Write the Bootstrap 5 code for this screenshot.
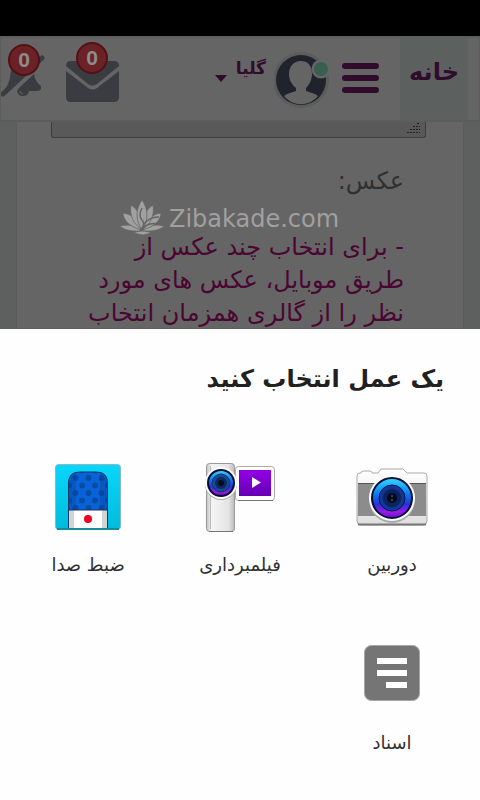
<!DOCTYPE html>
<html lang="fa" dir="rtl">
<head>
<meta charset="utf-8">
<meta name="viewport" content="width=device-width, initial-scale=1">
<title>یک عمل انتخاب کنید</title>
<link href="https://cdn.jsdelivr.net/npm/bootstrap@5.3.0/dist/css/bootstrap.min.css" rel="stylesheet">
<style>
body { font-family: "DejaVu Sans", sans-serif; background: #fefefe; color: #212121; }
svg { display: block; flex: none; }
.status-strip { height: 36px; background: #000; }
.top-bar { height: 86px; background: #656565; border: 2px solid #5c5c5c; border-left-width: 1px; border-right-width: 1px; direction: ltr; }
.home-tab { width: 68px; height: 82px; margin-right: 11px; background: #5c6160; color: #310b2c; font-size: 24px; line-height: 32px; padding-top: 18px; }
.user-link { color: #310b2c; font-size: 17px; line-height: 28px; padding-top: 16px; }
.user-link svg { margin-top: 21px; }
.bare { border: 0; background: none; padding: 0; }
.count { position: absolute; width: 32px; height: 32px; border: 2px solid #541015; border-radius: 50%; background: #6b2227; color: #8c8c8c; font: bold 21px/28px "Liberation Sans", sans-serif; text-align: center; }
.bell-count { left: 7px; top: 6px; }
.mail-count { left: 10px; top: 4px; }
.mail-btn { margin-left: 20px; }
.menu-btn { margin: 0 21px 0 12px; }
.page-area { height: 206px; background: #5d605f; overflow: hidden; }
.form-panel { margin: 0 16px; height: 206px; background: #656565; border: solid #595c5b; border-width: 0 1px; padding: 0 37px 0 34px; }
.note-input { display: block; width: 100%; height: 16px; resize: none; background: #595959; border: 1px solid #3c3c3c; border-top: 0; border-radius: 0 0 3px 3px; overflow: hidden; }
.grip { position: absolute; right: 6px; bottom: 5px; }
.photo-label { color: #303030; font-size: 24px; line-height: 32px; margin: 27px 22px 0 0; }
.brand-row { direction: ltr; height: 36px; margin: 2px 0 0 68px; color: #a0a0a0; font-size: 24px; line-height: 40px; }
.photo-help { color: #4a0632; font-size: 24px; line-height: 33px; margin: -4px 22px 0 0; white-space: nowrap; }
.sheet { background: #fefefe; border-top: 1px solid #606060; padding: 32px 12px 8px; }
.sheet-title { font-size: 24px; line-height: 36px; margin: 0 24px 60px; font-weight: bold; }
.choices { row-gap: 56px; }
.choice { width: 100%; color: #303030; font-size: 18px; line-height: 28px; }
.choice svg { margin: 0 auto 14px; }
</style>
<script src="https://cdn.jsdelivr.net/npm/bootstrap@5.3.0/dist/js/bootstrap.bundle.min.js"></script>
</head>
<body>
<div class="status-strip"></div>
<header class="top-bar d-flex align-items-start">
  <button class="bare position-relative" type="button" aria-label="اعلان‌ها">
    <svg width="45" height="82" viewBox="0 0 45 82"><path d="M10 24h26L3 53q8-10 7-29" fill="#3b3c41"/><path d="M2 56L41 20" stroke="#3b3c41" stroke-width="5" stroke-linecap="round"/><path d="M33 36q1 8 7 12v3q-1 2-4 2h-8q-1 5-6 5-5 0-6-5l2-3z" fill="#3b3c41"/><path d="M19 53q0 3 3 3" stroke="#656565" fill="none"/></svg>
    <span class="count bell-count">0</span>
  </button>
  <button class="bare mail-btn position-relative" type="button" aria-label="پیام‌ها">
    <svg width="54" height="82" viewBox="0 0 54 82"><path d="M0 28q0-5 5-5h43q5 0 5 5L31 46q-5 3-9 0Z" fill="#3b3c41"/><path d="M0 33l22 17q5 3 9 0l22-17v26q0 5-5 5H5q-5 0-5-5z" fill="#3b3c41"/></svg>
    <span class="count mail-count">0</span>
  </button>
  <a href="#" class="user-link d-flex text-decoration-none fw-bold ms-auto gap-2" dir="rtl"><span>گلیا</span><svg width="13" height="8" viewBox="0 0 13 8"><path d="M0 0h12L6 7z" fill="#310b2c"/></svg></a>
  <button class="bare ms-2" type="button" aria-label="حساب کاربری">
    <svg width="56" height="82" viewBox="0 0 56 82"><circle cx="27" cy="42" r="28" fill="#5c5c5c"/><circle cx="27" cy="42" r="25" fill="#1f232b"/><path d="M27 23c8 0 11 6 11 13 0 6-3 11-6 14v3l9 3 3 2c-9 11-25 11-34 0l3-2 9-3v-3c-4-3-7-8-7-14 0-7 4-13 12-13" fill="#656565"/><circle cx="47" cy="31" r="9.500" fill="#656565"/><circle cx="47" cy="31" r="7" fill="#3b5f4e"/></svg>
  </button>
  <button class="bare menu-btn" type="button" aria-label="منو">
    <svg width="37" height="82" viewBox="0 0 37 82"><path d="M3 28h31M3 40h31M3 52h31" stroke="#310b2c" stroke-width="6" stroke-linecap="round"/></svg>
  </button>
  <a href="#" class="home-tab text-decoration-none fw-bold text-center">خانه</a>
</header>
<main class="page-area">
  <div class="form-panel">
    <div class="position-relative">
      <textarea class="note-input" aria-label="متن"></textarea>
      <svg class="grip" width="14" height="10" viewBox="0 0 14 10"><path d="M1 9.500h13M4 6.500h10M7 3.500h7M11 .5h3" stroke="#202020" stroke-dasharray="2 1"/></svg>
    </div>
    <div class="photo-label">عکس:</div>
    <div class="brand-row d-flex gap-1">
      <svg width="46" height="36" viewBox="0 0 46 36" fill="#a0a0a0" stroke="#656565" stroke-width=".8"><path d="M23 32C6 33 2 28 1 27c8-2 16-1 22 5M23 32c17 1 21-4 22-5-8-2-16-1-22 5"/><path d="M23 31C7 27 4 18 4 14c9 1 16 7 19 17M23 31c16-4 19-13 19-17-9 1-16 7-19 17"/><path d="M22 30C11 22 11 12 12 6c8 5 11 14 10 24M24 30c11-8 11-18 10-24-8 5-11 14-10 24"/><path d="M23 31c-8-12-5-23 0-30 5 7 8 18 0 30"/><path d="M23 9q-4 8 0 12t-2 11M40 18Q26 18 23 31M39 25q-11-2-16 6" fill="none" stroke-width="1.500"/><path d="M14 34q9-4 19 0l-9 2z"/></svg>
      <span>Zibakade.com</span>
    </div>
    <div class="photo-help">- برای انتخاب چند عکس از<br>طریق موبایل، عکس های مورد<br>نظر را از گالری همزمان انتخاب</div>
  </div>
</main>
<section class="sheet" aria-labelledby="sheet-title">
  <h1 class="sheet-title" id="sheet-title">یک عمل انتخاب کنید</h1>
  <div class="choices row row-cols-3 g-0 text-center">
    <div class="col"><button class="bare choice" type="button">
      <svg width="72" height="80" viewBox="0 0 72 80">
        <defs><linearGradient id="lens" x2="0" y2="1"><stop stop-color="#36dcff"/><stop offset=".4" stop-color="#087bf5"/><stop offset=".65" stop-color="#2434d6"/><stop offset=".85" stop-color="#9b17ef"/><stop offset="1" stop-color="#6a12b8"/></linearGradient><linearGradient id="body" x2="0" y2="1"><stop stop-color="#fff"/><stop offset="1" stop-color="#dedede"/></linearGradient></defs>
        <path d="M1 19q0-3 3-3h1q0-2 3-2h6q2 0 2 2h6l3-4h22l4 4h17q3 0 3 3v45q0 4-4 4H5q-4 0-4-4z" fill="url(#body)" stroke="#aaa"/><path d="M2 27h68v32H2z" fill="#8c8c8c"/><path d="M2 26.500h68" stroke="#555"/><path d="M2 67.500h68" stroke="#777" stroke-width="2"/>
        <circle cx="36" cy="43" r="23" fill="#aaa"/><circle cx="36" cy="41" r="23" fill="#fafafa"/><circle cx="36" cy="41" r="20" fill="url(#lens)" stroke="#050f36" stroke-width="2"/><circle cx="36" cy="41" r="13" fill="#12379a" stroke="#071448"/><circle cx="36" cy="41" r="9" fill="#082266" stroke="#172451"/><circle cx="36" cy="41" r="5" fill="#050918"/><circle cx="36" cy="39" r="1" fill="#458"/><circle cx="36" cy="43" r="1" fill="#364"/>
      </svg>دوربین</button></div>
    <div class="col"><button class="bare choice" type="button">
      <svg width="72" height="80" viewBox="0 0 72 80">
        <defs><linearGradient id="screen" x2="0" y2="1"><stop stop-color="#9400e6"/><stop offset="1" stop-color="#6500b5"/></linearGradient><linearGradient id="metal"><stop stop-color="#c0c0c0"/><stop offset=".18" stop-color="#f5f5f5"/><stop offset=".78" stop-color="#e5e5e5"/><stop offset="1" stop-color="#bbb"/></linearGradient></defs>
        <rect x="2.500" y="6.500" width="28" height="68" rx="3" fill="url(#metal)" stroke="#999"/><path d="M6.500 9v63" stroke="#bbb"/><path d="M5 74.500h24" stroke="#777"/>
        <rect x="31.500" y="9.500" width="39" height="34" rx="3" fill="#fff" stroke="#aaa"/><path d="M34 43.500h35" stroke="#777"/><path d="M35 13h32v26H35z" fill="url(#screen)"/><path d="M48 20v11l9-5.500z" fill="#fff"/>
        <circle cx="17" cy="27" r="16" fill="#aaa"/><circle cx="17" cy="26" r="16" fill="#fff"/><circle cx="17" cy="26" r="13" fill="url(#lens)" stroke="#090d35" stroke-width="2"/><circle cx="17" cy="26" r="9" fill="#174a91" stroke="#15306c"/><circle cx="17" cy="26" r="6" fill="#0b2a64"/><circle cx="17" cy="26" r="3" fill="#070d22"/>
      </svg>فیلمبرداری</button></div>
    <div class="col"><button class="bare choice" type="button">
      <svg width="72" height="80" viewBox="0 0 72 80">
        <defs><linearGradient id="cyan" x2="0" y2="1"><stop stop-color="#08d6fb"/><stop offset="1" stop-color="#00bcdc"/></linearGradient><pattern id="dots" x="17" y="17" width="13" height="15" patternUnits="userSpaceOnUse"><rect width="13" height="15" fill="#0963d8"/><circle cx="6.500" cy="4" r="3" fill="#064ca4"/><circle cx="0" cy="11.500" r="3" fill="#064ca4"/><circle cx="13" cy="11.500" r="3" fill="#064ca4"/></pattern></defs>
        <rect x="3.500" y="7.500" width="65" height="65" rx="3" fill="url(#cyan)" stroke="#8cb8c0"/><path d="M5 72h62" stroke="#178b9c" stroke-width="2"/>
        <path d="M16.500 53V26q0-11 11-11h17q11 0 11 11v27z" fill="url(#dots)"/><path d="M48 15q7 2 7 11v27h-7zM17 26q0-9 7-11v38h-7z" fill="#043d8d" opacity=".3"/><path d="M16 53h40v18H16z" fill="#fff"/><path d="M17 53h5v18h-5zM50 53h5v18h-5z" fill="#d4d4d4"/><path d="M16.500 71V26q0-11 11-11h17q11 0 11 11v45M16 53h40" fill="none" stroke="#183663"/><circle cx="36" cy="62" r="4" fill="#f2001f"/>
      </svg>ضبط صدا</button></div>
    <div class="col"><button class="bare choice" type="button">
      <svg width="72" height="80" viewBox="0 0 72 80"><rect x="8.500" y="10.500" width="55" height="55" rx="7" fill="#757575" stroke="#a7a7a7"/><path d="M21 26h30M21 38h30M30 50h21" stroke="#fff" stroke-width="6"/></svg>اسناد</button></div>
  </div>
</section>
</body>
</html>
